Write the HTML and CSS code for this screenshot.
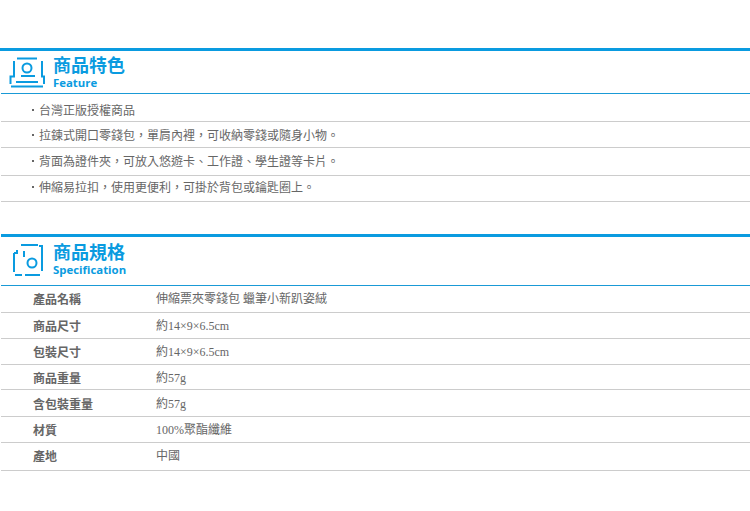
FILE: index.html
```html
<!DOCTYPE html>
<html lang="zh-Hant">
<head>
<meta charset="utf-8">
<title>商品特色</title>
<link rel="stylesheet" href="styles.css">
</head>
<body>
<section class="section feature">
  <header class="head">
    <svg class="icon" width="36" height="33" viewBox="0 0 36 33" fill="none" stroke="#0a9be0" stroke-width="2">
      <path d="M8 2.500H28"/>
      <path d="M5 5V20.500H1.500V28M33 5V20.500H35V28"/>
      <circle cx="18" cy="12" r="4.500"/>
      <path d="M12 20H26M7 26H29M2 30.500H34"/>
    </svg>
    <div class="titles">
      <h2>商品特色</h2>
      <p>Feature</p>
    </div>
  </header>
  <ul class="list">
    <li>台灣正版授權商品</li>
    <li>拉鍊式開口零錢包，單肩內裡，可收納零錢或隨身小物。</li>
    <li>背面為證件夾，可放入悠遊卡、工作證、學生證等卡片。</li>
    <li>伸縮易拉扣，使用更便利，可掛於背包或鑰匙圈上。</li>
  </ul>
</section>
<section class="section spec">
  <header class="head">
    <svg class="icon" width="36" height="36" viewBox="0 0 36 36" fill="none" stroke="#0a9be0" stroke-width="2">
      <path d="M11 3H28M29 4H32V29"/>
      <path d="M4 11V30M4 11H7V8"/>
      <path d="M14 9V15"/>
      <circle cx="22" cy="21" r="4.500"/>
      <path d="M5 33H12M15 33H30"/>
    </svg>
    <div class="titles">
      <h2>商品規格</h2>
      <p>Specification</p>
    </div>
  </header>
  <div class="table">
    <div class="row"><b>產品名稱</b><span>伸縮票夾零錢包 蠟筆小新趴姿絨</span></div>
    <div class="row"><b>商品尺寸</b><span>約14×9×6.5cm</span></div>
    <div class="row"><b>包裝尺寸</b><span>約14×9×6.5cm</span></div>
    <div class="row"><b>商品重量</b><span>約57g</span></div>
    <div class="row"><b>含包裝重量</b><span>約57g</span></div>
    <div class="row"><b>材質</b><span>100%聚酯纖維</span></div>
    <div class="row"><b>產地</b><span>中國</span></div>
  </div>
</section>
</body>
</html>
```
FILE: styles.css
```css
* { box-sizing: border-box; }
html, body { margin: 0; padding: 0; background: #fff; }
body {
  width: 750px;
  height: 511px;
  overflow: hidden;
  font-family: "Noto Sans CJK TC", "Liberation Sans", sans-serif;
  font-size: 12px;
  line-height: 20px;
  color: #666;
}
.section { border-top: 3px solid #0a9be0; }
.feature { margin-top: 48px; }
.spec { margin-top: 32px; margin-left: 1px; }
.head {
  display: flex;
  align-items: flex-start;
  gap: 8px;
  height: 43px;
  padding: 5px 0 0 8px;
  border-bottom: 1px solid #1a9ad6;
}
.feature .head { margin-left: 1px; }
.spec .head { height: 49px; padding-left: 9px; gap: 7px; }
.icon { flex: none; }
.titles { margin-top: -1px; color: #0a9be0; }
.feature .titles { margin-top: -2px; }
h2 {
  margin: 0;
  font-size: 18px;
  line-height: 20px;
  font-weight: 700;
}
.titles p {
  margin: 1px 0 0;
  font-family: "Open Sans", sans-serif;
  font-size: 11.4px;
  line-height: 15px;
  font-weight: 700;
}
.list { list-style: none; margin: 0; padding: 0; }
.list li {
  display: flex;
  align-items: flex-start;
  gap: 5px;
  height: 26px;
  margin-left: 1px;
  padding: 3px 0 0 31px;
  border-bottom: 1px solid #ccc;
}
.list li::before {
  content: "";
  flex: none;
  width: 2px;
  height: 2px;
  margin-top: 9px;
  background: #666;
}
.list li:nth-child(odd) { height: 28px; }
.list li:nth-child(1) { padding-top: 6px; }
.list li:nth-child(4) { padding-top: 1px; }
.row {
  display: grid;
  grid-template-columns: 155px 1fr;
  height: 26px;
  padding-top: 3px;
  border-bottom: 1px solid #ccc;
}
.row b { padding-left: 32px; font-weight: 700; }
.row span { font-family: "Liberation Serif", "Noto Sans CJK TC", serif; }
.row:nth-child(1) { height: 27px; }
.row:nth-child(4) { height: 25px; }
.row:nth-child(5) { height: 27px; padding-top: 4px; }
.row:nth-child(7) { height: 28px; }
```
